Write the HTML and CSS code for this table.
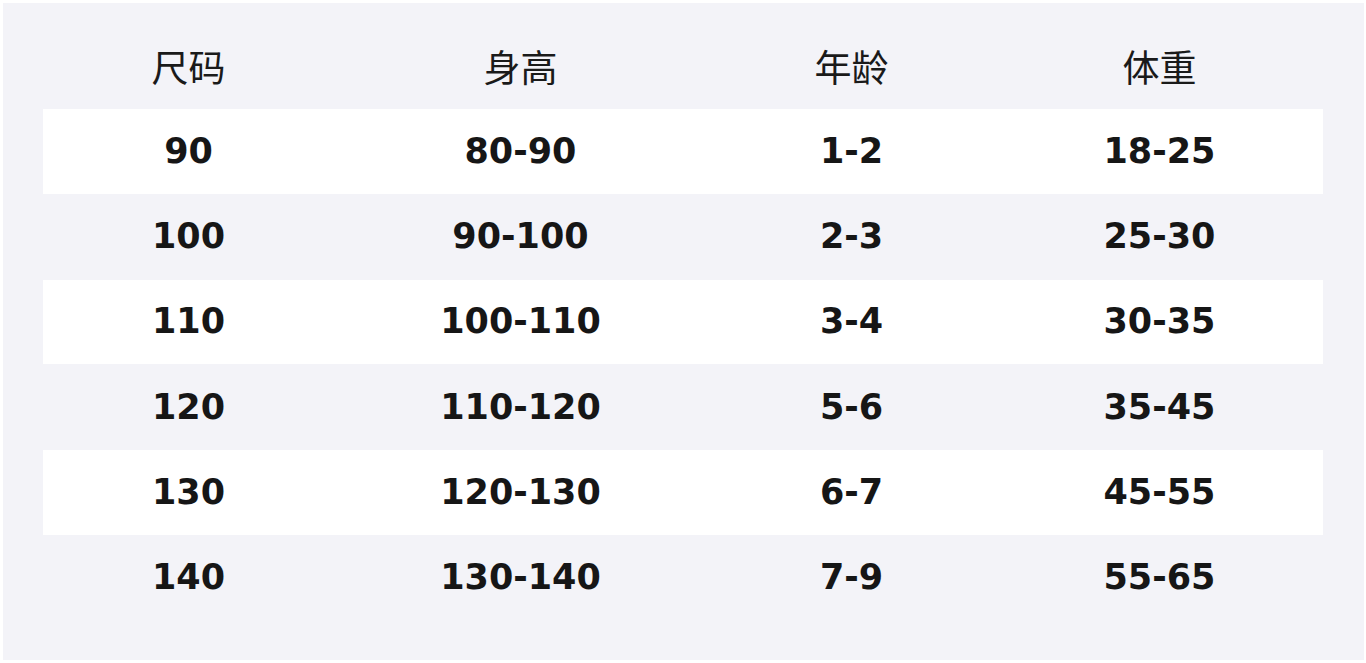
FILE: index.html
```html
<!DOCTYPE html>
<html lang="zh-CN">
<head>
<meta charset="utf-8">
<title>尺码表</title>
<link rel="stylesheet" href="styles.css">
</head>
<body>
<div class="card">
  <div class="table">
    <div class="row head">
      <div class="cell">尺码</div><div class="cell">身高</div><div class="cell">年龄</div><div class="cell">体重</div>
    </div>
    <div class="row odd">
      <div class="cell">90</div><div class="cell">80-90</div><div class="cell">1-2</div><div class="cell">18-25</div>
    </div>
    <div class="row">
      <div class="cell">100</div><div class="cell">90-100</div><div class="cell">2-3</div><div class="cell">25-30</div>
    </div>
    <div class="row odd">
      <div class="cell">110</div><div class="cell">100-110</div><div class="cell">3-4</div><div class="cell">30-35</div>
    </div>
    <div class="row">
      <div class="cell">120</div><div class="cell">110-120</div><div class="cell">5-6</div><div class="cell">35-45</div>
    </div>
    <div class="row odd">
      <div class="cell">130</div><div class="cell">120-130</div><div class="cell">6-7</div><div class="cell">45-55</div>
    </div>
    <div class="row">
      <div class="cell">140</div><div class="cell">130-140</div><div class="cell">7-9</div><div class="cell">55-65</div>
    </div>
  </div>
</div>
</body>
</html>
```
FILE: styles.css
```css
html, body {
  margin: 0;
  padding: 0;
  background: #ffffff;
}
body {
  padding: 3px 2px 3px 3px;
}
.card {
  background: #f3f3f8;
  height: 657px;
  box-sizing: border-box;
  padding: 21px 41px 0 40px;
}
.table {
  display: flex;
  flex-direction: column;
}
.row {
  display: grid;
  grid-template-columns: 291px 373px 289px 327px;
  height: 85.25px;
  box-sizing: border-box;
  border-bottom: 1.25px solid transparent;
  background-clip: padding-box;
  align-items: center;
  font-family: "DejaVu Sans", "Noto Sans CJK SC", sans-serif;
  font-weight: bold;
  font-size: 35px;
  color: #161616;
}
.row.odd {
  background-color: #ffffff;
}
.cell {
  text-align: center;
  line-height: 1;
}
.row.head {
  font-family: "Noto Sans CJK SC", sans-serif;
  font-weight: normal;
  font-size: 37px;
  color: #1a1a1a;
}
```
